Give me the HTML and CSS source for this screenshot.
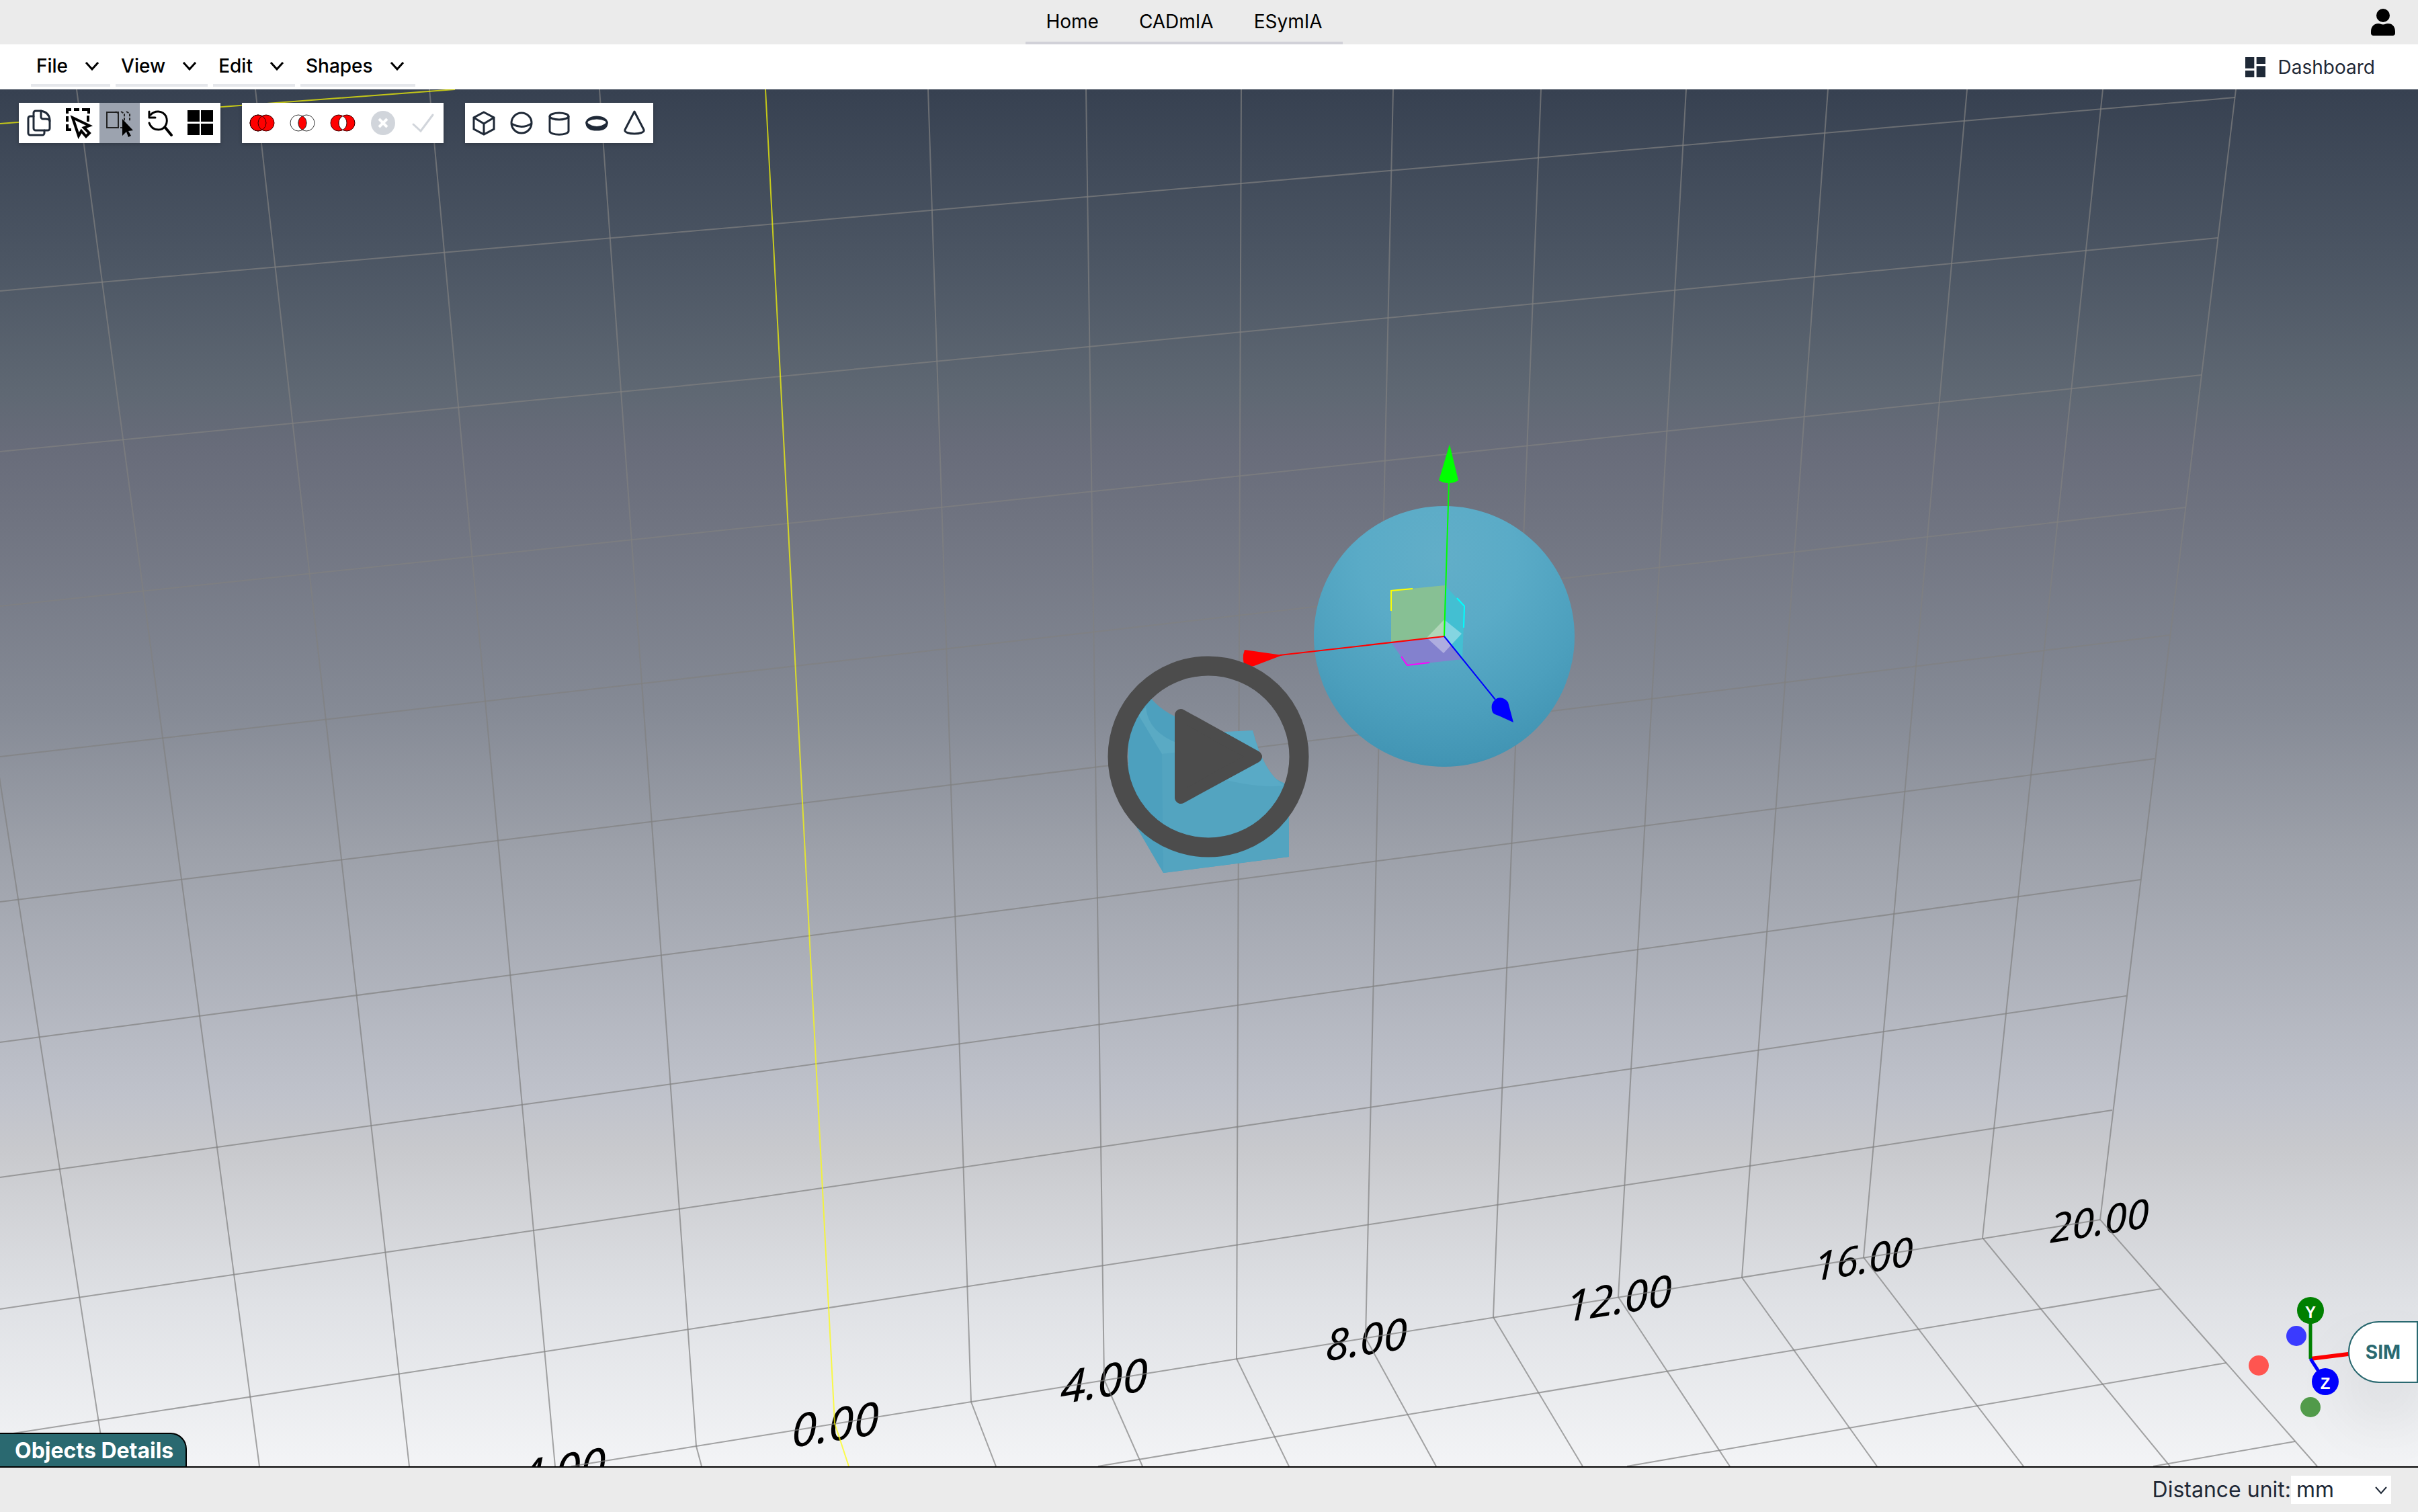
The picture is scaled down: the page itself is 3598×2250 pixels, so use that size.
FILE: index.html
```html
<!DOCTYPE html>
<html lang="en">
<head>
<meta charset="utf-8">
<meta name="viewport" content="width=device-width, initial-scale=1">
<title>CADmIA</title>
<link rel="stylesheet" href="styles.css">
</head>
<body>
<header class="topbar">
  <nav class="tabs" aria-label="Main">
    <a class="tab" href="#home">Home</a>
    <a class="tab" href="#cadmia">CADmIA</a>
    <a class="tab" href="#esymia">ESymIA</a>
  </nav>
  <button class="user" type="button" aria-label="Account">
    <svg width="36" height="40" viewBox="0 0 36 40"><circle cx="18" cy="10" r="10"/><path d="M11 22c3 0 4 1.500 7 1.500s4-1.500 7-1.500c7 0 11 5 11 12v2.500c0 2-1.500 3.500-3.500 3.500h-29C1.500 40 0 38.500 0 36.500V34c0-7 4-12 11-12z"/></svg>
  </button>
</header>

<div class="menubar">
  <div class="menus">
    <button class="menu" type="button">File<svg class="chevron" viewBox="0 0 24 14"><path d="M3 2l9 10 9-10"/></svg></button>
    <button class="menu" type="button">View<svg class="chevron" viewBox="0 0 24 14"><path d="M3 2l9 10 9-10"/></svg></button>
    <button class="menu" type="button">Edit<svg class="chevron" viewBox="0 0 24 14"><path d="M3 2l9 10 9-10"/></svg></button>
    <button class="menu" type="button">Shapes<svg class="chevron" viewBox="0 0 24 14"><path d="M3 2l9 10 9-10"/></svg></button>
  </div>
  <a class="dashboard" href="#dashboard">
    <svg width="40" height="40" viewBox="0 0 24 24"><path d="M3 13h8V3H3v10zm0 8h8v-6H3v6zm10 0h8V11h-8v10zm0-18v6h8V3h-8z"/></svg>
    Dashboard
  </a>
</div>

<main class="viewer">
  <svg class="scene" viewBox="0 133 3598 2049" preserveAspectRatio="xMidYMid slice" aria-label="3D scene">
    <defs>
      <radialGradient id="ball" cx="0.48" cy="0.2" r="0.85" fx="0.48" fy="0.2">
        <stop offset="0" stop-color="#62aec8"/>
        <stop offset="0.35" stop-color="#5aabc7"/>
        <stop offset="0.7" stop-color="#4c9fbd"/>
        <stop offset="0.92" stop-color="#4295b4"/>
        <stop offset="1" stop-color="#398aaa"/>
      </radialGradient>
    </defs>
    <g class="labels">
      <text font-size="68" transform="translate(826 2214) skewY(-9)">-4.00</text>
      <text font-size="68" transform="translate(1243 2144) skewY(-9)">0.00</text>
      <text font-size="68" transform="translate(1643 2079) skewY(-9)">4.00</text>
      <text font-size="64" transform="translate(2033 2016) skewY(-9)">8.00</text>
      <text font-size="64" transform="translate(2409 1955) skewY(-9)">12.00</text>
      <text font-size="60" transform="translate(2773 1895) skewY(-9)">16.00</text>
      <text font-size="60" transform="translate(3124 1838) skewY(-9)">20.00</text>
    </g>
    <g class="grid">
      <path d="M3327 133L3125 1815L3448 2182M3129 133L2950 1842L3229 2182M2927 133L2773 1871L3011 2182M2720 133L2592 1901L2793 2182M2509 133L2408 1930L2574 2182M2293 133L2222 1960L2355 2182M2073 133L2032 1991L2137 2182M1847 133L1840 2022L1918 2182M1616 133L1643 2053L1700 2182M1381 133L1445 2086L1482 2182M892 133L1036 2152L1044 2182M639 133L826 2182M380 133L609 2182M114 133L386 2182M-1 1156L157 2182"/>
      <path d="M0 433L3326 145M0 672L3300 354M0 902L3276 558M0 1126L3253 755M0 1342L3229 945M0 1551L3206 1129M0 1752L3185 1309M0 1948L3164 1482M0 2136L3143 1652M850 2182L3125 1815M1634 2182L3215 1918M2421 2182L3313 2028M3204 2182L3415 2145"/>
    </g>
    <path class="axis" d="M0 184L677 133M1139 133L1242 2118L1263 2182"/>

    <circle cx="2149" cy="947" r="194" fill="url(#ball)"/>

    <g class="cube">
      <path fill="#4da0be" d="M1679 1050L1700 1020Q1715 1050 1748 1066L1800 1090L1828 1090L1864 1087Q1880 1150 1911 1169L1918 1169V1275L1731 1299L1679 1210z"/>
      <path fill="#53a4c0" d="M1729 1122L1800 1110L1918 1169V1275L1731 1299z"/>
      <path fill="#59aac6" d="M1800 1090L1864 1087Q1880 1150 1911 1169Q1865 1174 1800 1154z"/>
      <path fill="#5aaac4" d="M1694 1064L1705 1052Q1708 1090 1755 1107V1119L1729 1122z"/>
    </g>

    <g class="gizmo">
      <path fill="#87c094" d="M2070 879L2150 871L2149 947L2070 956z"/>
      <path fill="#43bfd2" d="M2150 871L2179 902L2176 981L2149 947z"/>
      <path fill="#8381ce" d="M2149 947L2176 981L2094 990L2070 956z"/>
      <path fill="#fff" fill-opacity="0.350" d="M2149 922L2175 943L2148 972L2123 949z"/>
      <path fill="none" stroke="#ff0" d="M2070 909V879L2102 876"/>
      <path fill="none" stroke="#0ff" d="M2168 890L2179 902L2178 934"/>
      <path fill="none" stroke="#f0f" d="M2085 977L2094 990L2127 986"/>
      <path stroke="#0f0" d="M2149 947L2156 718"/>
      <path fill="#0f0" d="M2157 661L2170 715Q2156 723 2141 715z"/>
      <path stroke="#f00" d="M2149 947L1904 975"/>
      <path fill="#f00" d="M1908 975L1852 967Q1847 980 1853 994L1866 991z"/>
      <path stroke="#00f" d="M2149 947L2225 1041"/>
      <path fill="#00f" d="M2252 1075L2244 1045Q2237 1036 2228 1039Q2216 1046 2221 1060Q2223 1063 2230 1065z"/>
    </g>
  </svg>

  <div class="toolbars">
    <div class="toolbar" role="toolbar" aria-label="Edit">
      <button type="button" class="tool" aria-label="Duplicate"><svg viewBox="0 0 60 60"><g fill="none" stroke="#1f2937" stroke-width="3" stroke-linejoin="round" stroke-linecap="round"><path d="M22 20h-5a3 3 0 0 0-3 3v22a3 3 0 0 0 3 3h18a3 3 0 0 0 3-3v-4"/><path d="M25 12h8q12 2 13 13v13a3 3 0 0 1-3 3H25a3 3 0 0 1-3-3V15a3 3 0 0 1 3-3z"/><path d="M33 12v9a3 3 0 0 0 3 3h4q5 0 6 3"/></g></svg></button>
      <button type="button" class="tool" aria-label="Box select"><svg viewBox="0 0 60 60"><path fill="none" stroke="#000" stroke-width="4" d="M12 16v-6h6M22 10h8M34 10h10v6M12 20v8M12 32v8h6M43 19v9"/><path fill="#fff" stroke="#000" stroke-width="4" stroke-linejoin="miter" d="M20 22L45 34L37 37L45 45L40 50L33 42L29 49z"/></svg></button>
      <button type="button" class="tool tool-active" aria-label="Multi select"><svg viewBox="0 0 60 60"><path fill="none" stroke="#222" stroke-width="2" d="M11 14h17v23H11z"/><path fill="none" stroke="#222" stroke-width="2" stroke-dasharray="4 2" d="M24 13l5 3M32 13l5 3v21h-6M40 13l5 3v12"/><path d="M34 24L50 41L43 42L47 49L43 51L40 43L34 49z"/></svg></button>
      <button type="button" class="tool" aria-label="Reset view"><svg viewBox="0 0 60 60"><g fill="none" stroke="#000" stroke-width="3" stroke-linecap="round" stroke-linejoin="round"><path d="M16 18C22 11 34 11 39 20C43 30 37 40 28 40C21 40 16 36 14 30"/><path d="M14 13v9h9"/><path stroke-width="4" d="M38 37l9 11"/></g></svg></button>
      <button type="button" class="tool" aria-label="Views"><svg viewBox="0 0 60 60"><path d="M11 11h18v17H11zM31 11h18v17H31zM11 31h18v17H11zM31 31h18v17H31z"/></svg></button>
    </div>
    <div class="toolbar" role="toolbar" aria-label="Boolean operations">
      <button type="button" class="tool" aria-label="Union"><svg viewBox="0 0 60 60"><g fill="#f00" stroke="#300"><circle cx="24" cy="30" r="12"/><circle cx="36" cy="30" r="12"/><circle cx="24" cy="30" r="12" fill="none"/></g></svg></button>
      <button type="button" class="tool" aria-label="Intersection"><svg viewBox="0 0 60 60"><g fill="none" stroke="#333"><circle cx="24" cy="30" r="12"/><circle cx="36" cy="30" r="12"/><path fill="#f00" d="M30 19.600a12 12 0 0 1 0 20.800a12 12 0 0 1 0-20.800z"/></g></svg></button>
      <button type="button" class="tool" aria-label="Subtraction"><svg viewBox="0 0 60 60"><g fill="#f00" stroke="#300"><circle cx="24" cy="30" r="12"/><circle cx="36" cy="30" r="12"/><path fill="#fff" d="M30 19.600a12 12 0 0 1 0 20.800a12 12 0 0 1 0-20.800z"/></g></svg></button>
      <button type="button" class="tool" aria-label="Cancel"><svg viewBox="0 0 60 60"><circle cx="30" cy="30" r="18" fill="#d1d5db"/><path stroke="#fff" stroke-width="4" d="M24 24l12 12M36 24L24 36"/></svg></button>
      <button type="button" class="tool" aria-label="Confirm"><svg viewBox="0 0 60 60"><path fill="none" stroke="#d1d5db" stroke-width="3" stroke-linecap="round" d="M15 32l11 10L44 18"/></svg></button>
    </div>
    <div class="toolbar toolbar-shapes" role="toolbar" aria-label="Shapes">
      <button type="button" class="tool" aria-label="Cube"><svg viewBox="0 0 56 60"><path d="M28 14L43 22V39L28 47L13 39V22zM13 22L28 31L43 22M28 31V47"/></svg></button>
      <button type="button" class="tool" aria-label="Sphere"><svg viewBox="0 0 56 60"><circle cx="28" cy="30" r="15"/><path d="M13 31Q28 40 43 31"/></svg></button>
      <button type="button" class="tool" aria-label="Cylinder"><svg viewBox="0 0 56 60"><ellipse cx="28" cy="20" rx="14" ry="5"/><path d="M14 20v22c0 7 28 7 28 0V20"/></svg></button>
      <button type="button" class="tool" aria-label="Torus"><svg viewBox="0 0 56 60"><ellipse cx="28" cy="30" rx="15" ry="9"/><path fill="#1f2937" d="M13 31Q28 42 43 31Q42 40 28 40Q14 40 13 31z"/><path d="M14 26Q28 20 42 26"/></svg></button>
      <button type="button" class="tool" aria-label="Cone"><svg viewBox="0 0 56 60"><path stroke-linejoin="round" d="M28 13L42 40C45 48 11 48 14 40z"/></svg></button>
    </div>
  </div>

  <svg class="compass" width="180" height="190" viewBox="3340 1925 180 190" aria-label="Orientation">
    <path stroke="#f00" stroke-width="6" d="M3438 2022L3510 2013"/>
    <path stroke="#008000" stroke-width="5" d="M3438 2022V1950"/>
    <path stroke="#00f" stroke-width="5" d="M3438 2022L3460 2056"/>
    <circle cx="3438" cy="1950" r="20" fill="#008000"/>
    <circle cx="3460" cy="2056" r="20" fill="#00f"/>
    <circle cx="3417" cy="1988" r="15" fill="#3a3aff"/>
    <circle cx="3361" cy="2032" r="15" fill="#ff5550"/>
    <circle cx="3438" cy="2094" r="15" fill="#529b4b"/>
    <text x="3438" y="1961">Y</text>
    <text x="3460" y="2067">Z</text>
  </svg>

  <button class="sim" type="button">SIM</button>
  <button class="details" type="button">Objects Details</button>
</main>

<footer class="statusbar">
  <label for="unit">Distance unit:</label>
  <div class="unit">
    <select id="unit"><option>mm</option><option>cm</option><option>m</option></select>
    <svg class="unit-arrow" viewBox="0 0 18 12"><path d="M1 1l8 9 8-9"/></svg>
  </div>
</footer>

<button class="play" type="button" aria-label="Play">
  <svg viewBox="0 0 300 300"><circle cx="149" cy="151" r="135"/><path d="M108 89L220 151L108 212z"/></svg>
</button>
</body>
</html>
```
FILE: styles.css
```css
* {
  box-sizing: border-box;
}

body {
  margin: 0;
  min-height: 100vh;
  display: flex;
  flex-direction: column;
  position: relative;
  overflow: hidden;
  background: #ebebeb;
  color: #1f2937;
  font-family: Inter, "Liberation Sans", sans-serif;
  font-size: 28px;
  line-height: 40px;
}

button,
select {
  margin: 0;
  padding: 0;
  border: 0;
  background: none;
  color: inherit;
  font: inherit;
}

a {
  color: inherit;
  text-decoration: none;
}

svg {
  display: block;
}

/* Top navigation */
.topbar {
  display: flex;
  align-items: center;
  height: 66px;
  color: #000;
}

.tabs {
  display: flex;
  margin: 0 auto;
  border-bottom: 4px solid #d1d1d8;
}

.tab {
  padding: 12px 30px 10px;
}

.user {
  margin: 0 34px 0 4px;
}

/* Menu row */
.menubar {
  display: flex;
  justify-content: space-between;
  height: 67px;
  padding: 0 64px 0 46px;
  background: #fff;
}

.menus {
  display: flex;
  gap: 8px;
  height: 63px;
}

.menu {
  display: flex;
  align-items: center;
  gap: 24px;
  padding: 4px 15px 0 8px;
  border-bottom: 4px solid #e5e7eb;
  color: #000;
  font-weight: 500;
}

.chevron {
  width: 24px;
  height: 14px;
  fill: none;
  stroke: #000;
  stroke-width: 3;
}

.dashboard {
  display: flex;
  align-items: center;
  gap: 14px;
}

.dashboard svg {
  fill: #1f2937;
}

/* 3D viewer */
.viewer {
  position: relative;
  flex: 1;
  overflow: hidden;
  background: linear-gradient(#374151 0%, #4b5563 12%, #5f6873 22%, #686c7a 26%, #6f7380 31%, #858a95 45%, #9ca0a9 55%, #bfc2cb 73%, #c8c9cd 77%, #dfe1e5 88%, #f3f4f6 100%);
}

.scene {
  position: absolute;
  inset: 0;
  width: 100%;
  height: 100%;
}

.labels {
  font-family: "Noto Sans", "Open Sans", sans-serif;
  font-style: italic;
  text-anchor: middle;
  fill: #000;
}

.grid {
  fill: none;
  stroke: #808080;
  stroke-opacity: 0.7;
  stroke-width: 2;
}

.axis {
  fill: none;
  stroke: #ff0;
  stroke-opacity: 0.7;
  stroke-width: 2;
}

.gizmo {
  stroke-width: 2;
}

.toolbars {
  position: relative;
  display: flex;
  gap: 32px;
  padding: 20px 28px;
}

.toolbar {
  display: flex;
  background: #fff;
  box-shadow: 0 2px 6px rgba(0, 0, 0, 0.2);
}

.tool {
  width: 60px;
  height: 60px;
}

.tool-active {
  background: #9ca3af;
}

.toolbar-shapes .tool {
  width: 56px;
}

.toolbar-shapes svg {
  fill: none;
  stroke: #1f2937;
  stroke-width: 3;
}

.compass {
  position: absolute;
  right: 78px;
  bottom: 67px;
}

.compass text {
  fill: #fff;
  font-family: "Liberation Sans", Arial, sans-serif;
  font-size: 24px;
  font-weight: 700;
  text-anchor: middle;
}

.sim {
  position: absolute;
  right: 0;
  bottom: 124px;
  width: 104px;
  height: 92px;
  border: 2px solid #2a6970;
  border-radius: 46px 0 0 46px;
  background: #fff;
  box-shadow: 0 50px 100px -24px rgba(0, 0, 0, 0.25);
  color: #2a6970;
  font-weight: 700;
}

.details {
  position: absolute;
  left: 0;
  bottom: 0;
  height: 50px;
  padding: 2px 18px 0 22px;
  border: 2px solid #000;
  border-width: 2px 2px 0 0;
  border-radius: 0 24px 0 0;
  background: #2a6970;
  color: #fff;
  font-size: 32px;
  font-weight: 700;
}

/* Status bar */
.statusbar {
  display: flex;
  align-items: center;
  justify-content: flex-end;
  height: 68px;
  padding-right: 40px;
  border-top: 2px solid #000;
  background: #ebebeb;
  font-size: 32px;
}

.unit {
  position: relative;
}

.unit select {
  display: block;
  width: 149px;
  height: 42px;
  padding-left: 8px;
  appearance: none;
  background: #fff;
}

.unit-arrow {
  position: absolute;
  top: 16px;
  right: 6px;
  width: 18px;
  height: 12px;
  fill: none;
  stroke: #1f2937;
  stroke-width: 2;
  pointer-events: none;
}

/* Video play overlay */
.play {
  position: absolute;
  top: 50%;
  left: 50%;
  width: 300px;
  height: 300px;
  margin: -150px 0 0 -150px;
}

.play svg {
  overflow: visible;
}

.play circle {
  fill: none;
  stroke: #4c4c4c;
  stroke-width: 29;
}

.play path {
  fill: #4c4c4c;
  stroke: #4c4c4c;
  stroke-width: 18;
  stroke-linejoin: round;
}
```
